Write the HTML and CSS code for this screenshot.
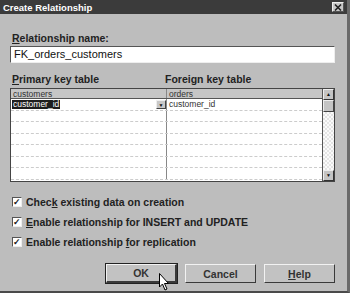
FILE: index.html
```html
<!DOCTYPE html>
<html lang="en">
<head>
  <meta charset="UTF-8" />
  <title>Create Relationship</title>
  <link rel="stylesheet" href="styles.css">
</head>
<body>
  <div class="dialog">

    <!-- Title bar -->
    <div class="titlebar">
      <span class="title">Create Relationship</span>
      <span class="close">
        <svg width="8" height="7" viewBox="0 0 8 7"><path d="M1 0.5 L7 6.5 M7 0.5 L1 6.5" stroke="#222" stroke-width="1.6"/></svg>
      </span>
    </div>

    <div class="content">
      <div class="label"><u>R</u>elationship name:</div>
      <div class="textbox">FK_orders_customers</div>

      <div class="table-labels">
        <span class="pk-label"><u>P</u>rimary key table</span>
        <span>Foreign key table</span>
      </div>

      <!-- Key grid -->
      <div class="grid">
        <div class="grid-body">
          <div class="row head">
            <div class="cell">customers</div>
            <div class="cell">orders</div>
          </div>
          <div class="row">
            <div class="cell combo"><span class="sel">customer_id</span><span class="drop">&#9660;</span></div>
            <div class="cell">customer_id</div>
          </div>
          <div class="row"><div class="cell"></div><div class="cell"></div></div>
          <div class="row"><div class="cell"></div><div class="cell"></div></div>
          <div class="row"><div class="cell"></div><div class="cell"></div></div>
          <div class="row"><div class="cell"></div><div class="cell"></div></div>
          <div class="row"><div class="cell"></div><div class="cell"></div></div>
          <div class="row"><div class="cell"></div><div class="cell"></div></div>
        </div>
        <div class="scrollbar">
          <div class="sb-btn">&#9650;</div>
          <div class="sb-thumb"></div>
          <div class="sb-track"></div>
          <div class="sb-btn">&#9660;</div>
        </div>
      </div>

      <div class="checks">
        <div class="check"><span class="box">&#10003;</span><span>Chec<u>k</u> existing data on creation</span></div>
        <div class="check"><span class="box">&#10003;</span><span><u>E</u>nable relationship for INSERT and UPDATE</span></div>
        <div class="check"><span class="box">&#10003;</span><span>Enable relationship <u>f</u>or replication</span></div>
      </div>

      <div class="buttons">
        <div class="btn default">OK
          <svg class="cursor" width="11" height="18" viewBox="0 0 11 18"><path d="M0.5 0.5 L0.5 14 L3.5 11 L6 17 L8 16 L5.5 10.5 L9.5 10.5 Z" fill="#fff" stroke="#000" stroke-width="1"/></svg>
        </div>
        <div class="btn">Cancel</div>
        <div class="btn"><span><u>H</u>elp</span></div>
      </div>
    </div>
  </div>
</body>
</html>
```

FILE: styles.css
```css
body {
  margin: 0;
  padding: 0;
  background: #bcbcbc;
  font-family: 'Liberation Sans', Arial, sans-serif;
}

.dialog {
  width: 350px;
  height: 293px;
  box-sizing: border-box;
  background: #bdbdbd;
  border-right: 3px solid #6a6a6a;
  border-bottom: 2px solid #4a4a4a;
  overflow: hidden;
}

.titlebar {
  height: 14px;
  background: #3b3b3b;
  color: white;
  display: flex;
  justify-content: space-between;
  align-items: center;
  padding: 0 3px 0 3px;
}

.title {
  font-weight: bold;
  font-size: 9.5px;
}

.close {
  width: 12px;
  height: 10px;
  background: #c8c8c8;
  border: 1px solid;
  border-color: #eee #555 #555 #eee;
  display: flex;
  justify-content: center;
  align-items: center;
  box-sizing: border-box;
}

.content {
  padding: 0 12px 0 10px;
}

.label {
  margin-top: 18px;
  padding-left: 2px;
  font-weight: bold;
  font-size: 10.5px;
  color: #222;
  height: 13px;
}

.textbox {
  margin-top: 1px;
  height: 17px;
  box-sizing: border-box;
  background: white;
  border: 1px solid;
  border-color: #555 #eee #eee #555;
  font-size: 11px;
  line-height: 15px;
  padding-left: 3px;
  color: #111;
}

.table-labels {
  margin-top: 10px;
  display: flex;
  font-weight: bold;
  font-size: 10.5px;
  color: #222;
  height: 13px;
  padding-left: 2px;
}

.pk-label {
  width: 153px;
}

.grid {
  margin-top: 2px;
  height: 94px;
  box-sizing: border-box;
  border: 1px solid #444;
  display: flex;
  background: white;
}

.grid-body {
  flex: 1;
  overflow: hidden;
}

.row {
  display: flex;
  height: 11.5px;
  border-bottom: 1px dashed #ccc;
  box-sizing: border-box;
}

.row.head {
  height: 10px;
  background: #c6c6c6;
  border-bottom: 1px solid #555;
}

.cell {
  font-size: 8.5px;
  color: #333;
  padding-left: 2px;
  line-height: 10px;
  box-sizing: border-box;
}

.cell:first-child {
  width: 156px;
  border-right: 1px solid #888;
}

.cell:last-child {
  flex: 1;
}

.combo {
  display: flex;
  justify-content: space-between;
  align-items: center;
  padding-left: 1px;
}

.sel {
  background: #1e1e1e;
  color: white;
  line-height: 9px;
  padding: 0 1px;
}

.drop {
  width: 10px;
  height: 9px;
  background: #c8c8c8;
  font-size: 5px;
  line-height: 9px;
  text-align: center;
  color: #111;
  border: 1px solid;
  border-color: #eee #444 #444 #eee;
  box-sizing: border-box;
}

.scrollbar {
  width: 12px;
  display: flex;
  flex-direction: column;
  border-left: 1px solid #555;
  box-sizing: border-box;
}

.sb-btn {
  height: 11px;
  background: #c4c4c4;
  border: 1px solid;
  border-color: #eee #333 #333 #eee;
  box-sizing: border-box;
  font-size: 5px;
  line-height: 9px;
  text-align: center;
  color: #111;
}

.sb-thumb {
  height: 12px;
  background: #c4c4c4;
  border: 1px solid;
  border-color: #eee #444 #444 #eee;
  box-sizing: border-box;
}

.sb-track {
  flex: 1;
  background: repeating-conic-gradient(#e4e4e4 0 25%, #fafafa 0 50%) 0 0 / 4px 4px;
}

.checks {
  margin-top: 13px;
  padding-left: 2px;
  display: flex;
  flex-direction: column;
  gap: 7px;
}

.check {
  display: flex;
  align-items: center;
  font-weight: bold;
  font-size: 10.5px;
  color: #222;
  height: 13px;
}

.box {
  width: 10px;
  height: 10px;
  box-sizing: border-box;
  background: white;
  border: 1px solid;
  border-color: #555 #eee #eee #555;
  font-size: 9px;
  line-height: 8px;
  text-align: center;
  color: #222;
  margin-right: 4px;
  font-weight: bold;
}

.buttons {
  margin-top: 16px;
  display: flex;
  justify-content: flex-end;
  gap: 8px;
}

.btn {
  position: relative;
  width: 71px;
  height: 19px;
  box-sizing: border-box;
  background: #c2c2c2;
  border: 1px solid;
  border-color: #f2f2f2 #3a3a3a #3a3a3a #f2f2f2;
  font-weight: bold;
  font-size: 10.5px;
  color: #333;
  display: flex;
  justify-content: center;
  align-items: center;
}

.btn.default {
  outline: 1px solid #222;
  border-width: 1px 2px 2px 1px;
}

.cursor {
  position: absolute;
  left: 52px;
  top: 8px;
}
```
